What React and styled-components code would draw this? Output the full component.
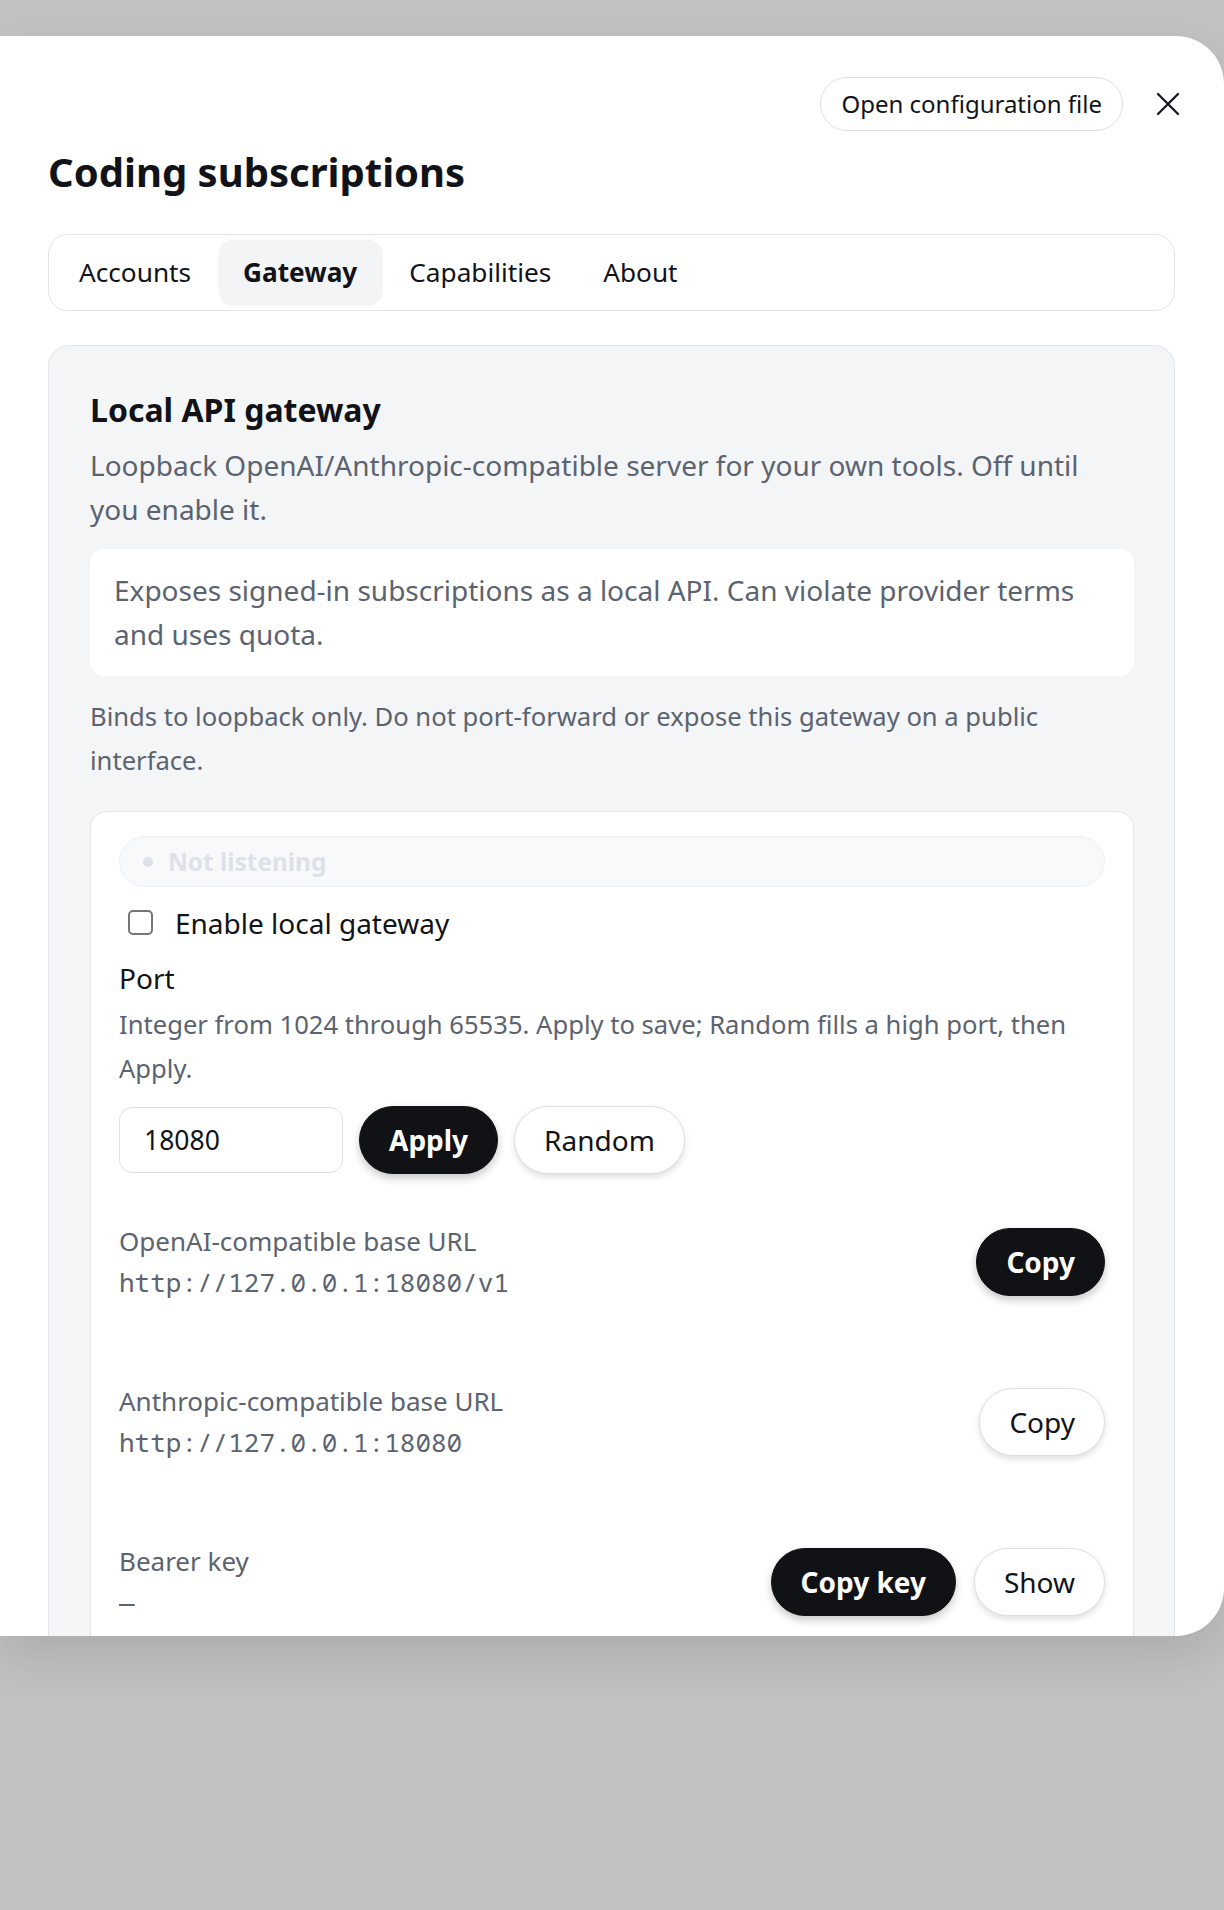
import React from "react";
import styled, { createGlobalStyle, css } from "styled-components";

const GlobalStyle = createGlobalStyle`
  html, body { margin: 0; padding: 0; background: #c1c1c1; }
  body {
    font-family: "Noto Sans", "Open Sans", sans-serif;
    color: #111318;
    -webkit-font-smoothing: antialiased;
  }
  *, *::before, *::after { box-sizing: border-box; }
`;

const Backdrop = styled.div`
  min-height: 1910px;
  padding-top: 36px;
  overflow: hidden;
`;

const Dialog = styled.section`
  width: 1224px;
  height: 1600px;
  background: #ffffff;
  border-radius: 0 48px 48px 0;
  box-shadow: 0 22px 46px rgba(0, 0, 0, 0.1);
  overflow: hidden;
  display: flex;
  flex-direction: column;
`;

const Header = styled.header`
  display: flex;
  justify-content: flex-end;
  align-items: center;
  gap: 23px;
  padding: 41px 34px 0 48px;
`;

const Button = styled.button`
  display: inline-flex;
  align-items: center;
  justify-content: center;
  height: ${(p) => (p.$small ? "54px" : "68px")};
  padding: 0 ${(p) => (p.$small ? "20px" : "29px")};
  border-radius: 999px;
  font-family: "Noto Sans", sans-serif;
  font-size: ${(p) => (p.$small ? "24px" : "28px")};
  line-height: 1;
  cursor: pointer;
  white-space: nowrap;
  ${(p) =>
    p.$primary
      ? css`
          background: #111216;
          color: #ffffff;
          font-weight: 700;
          border: 1.5px solid #111216;
          box-shadow: 0 4px 8px rgba(0, 0, 0, 0.22);
        `
      : css`
          background: #ffffff;
          color: #111318;
          font-weight: 400;
          border: 1.5px solid #dedfe2;
          box-shadow: ${p.$flat ? "none" : "0 3px 6px rgba(0, 0, 0, 0.13)"};
        `}
`;

const CloseButton = styled.button`
  width: 44px;
  height: 44px;
  display: inline-flex;
  align-items: center;
  justify-content: center;
  background: transparent;
  border: 0;
  padding: 0;
  cursor: pointer;
`;

const Body = styled.div`
  padding: 0 49px 0 48px;
  display: flex;
  flex-direction: column;
`;

const Title = styled.h1`
  margin: 16.5px 0 0;
  font-size: 40px;
  line-height: 48px;
  font-weight: 700;
  color: #111318;
`;

const TabList = styled.nav`
  margin-top: 38px;
  display: flex;
  gap: 3px;
  padding: 5.5px;
  border: 1.5px solid #e3e4e7;
  border-radius: 20px;
  background: #ffffff;
`;

const Tab = styled.button`
  height: 64px;
  padding: 0 24.5px;
  border: 0;
  border-radius: 14px;
  font-family: "Noto Sans", sans-serif;
  font-size: 26.2px;
  color: #111318;
  cursor: pointer;
  background: ${(p) => (p.$active ? "#f3f4f6" : "transparent")};
  font-weight: ${(p) => (p.$active ? 700 : 400)};
  box-shadow: ${(p) => (p.$active ? "0 1px 3px rgba(0,0,0,0.08)" : "none")};
`;

const Card = styled.section`
  margin-top: 34px;
  background: #f4f5f7;
  border: 1.5px solid #e2e4e8;
  border-radius: 21px;
  padding: 42.5px 40px 60px 41px;
  display: flex;
  flex-direction: column;
`;

const CardTitle = styled.h2`
  margin: 0;
  font-size: 32px;
  line-height: 44px;
  font-weight: 700;
  color: #111318;
`;

const Lead = styled.p`
  margin: 12px 0 0;
  max-width: 1015px;
  font-size: 28px;
  line-height: 43.5px;
  color: #5c6370;
`;

const Notice = styled.div`
  margin-top: 18px;
  background: #ffffff;
  border-radius: 14px;
  padding: 20px 24px;
  font-size: 28px;
  line-height: 43.5px;
  color: #5c6370;
`;

const Fine = styled.p`
  margin: ${(p) => p.$top || "19px"} 0 0;
  font-size: 25.6px;
  line-height: 43.5px;
  color: #5c6370;
`;

const Panel = styled.div`
  margin-top: 29px;
  background: #ffffff;
  border: 1.5px solid #e4e6ea;
  border-radius: 17px;
  padding: 24px 28px 60px;
  display: flex;
  flex-direction: column;
`;

const StatusPill = styled.div`
  height: 51px;
  display: flex;
  align-items: center;
  gap: 15px;
  padding: 0 23px;
  border-radius: 999px;
  background: #f8f9fb;
  border: 1.5px solid #eff1f4;
  color: #dde2ea;
  font-size: 24.4px;
  font-weight: 700;
`;

const Dot = styled.span`
  width: 10px;
  height: 10px;
  border-radius: 50%;
  background: #dde1e8;
`;

const CheckRow = styled.label`
  margin-top: 14px;
  display: flex;
  align-items: center;
  gap: 22px;
  height: 43.5px;
  font-size: 28px;
  color: #111318;
`;

const Check = styled.input`
  appearance: none;
  margin: 0 0 0 9px;
  width: 25px;
  height: 25px;
  border: 2px solid #74767a;
  border-radius: 5px;
  background: #ffffff;
`;

const FieldLabel = styled.div`
  margin-top: 12px;
  font-size: 28px;
  line-height: 43.5px;
  color: #111318;
`;

const Controls = styled.div`
  margin-top: 16px;
  display: flex;
  align-items: center;
  gap: 16px;
`;

const PortInput = styled.input`
  width: 224px;
  height: 66px;
  padding: 0 24px;
  border: 1.5px solid #dfe0e3;
  border-radius: 13px;
  font-family: "Noto Sans", sans-serif;
  font-size: 26.5px;
  color: #111318;
  background: #ffffff;
  outline: none;
`;

const Endpoints = styled.div`
  margin-top: 48px;
  display: flex;
  flex-direction: column;
  gap: 80px;
`;

const EndpointRow = styled.div`
  display: flex;
  align-items: center;
  justify-content: space-between;
  gap: 24px;
`;

const EndpointInfo = styled.div`
  display: flex;
  flex-direction: column;
  gap: 2px;
`;

const EndpointLabel = styled.span`
  font-size: 26px;
  line-height: 38px;
  color: #5c6370;
`;

const EndpointValue = styled.code`
  font-family: "Noto Sans Mono", "DejaVu Sans Mono", monospace;
  font-size: 26px;
  line-height: 40px;
  color: #5c6370;
`;

const Actions = styled.div`
  display: flex;
  align-items: center;
  gap: 18px;
`;

function CloseIcon() {
  return (
    <svg width="24" height="24" viewBox="0 0 24 24" fill="none">
      <path d="M2 2 L22 22 M22 2 L2 22" stroke="#111318" strokeWidth="2.2" strokeLinecap="round" />
    </svg>
  );
}

const tabs = ["Accounts", "Gateway", "Capabilities", "About"];

const endpoints = [
  { label: "OpenAI-compatible base URL", value: "http://127.0.0.1:18080/v1", primary: true, actions: ["Copy"] },
  { label: "Anthropic-compatible base URL", value: "http://127.0.0.1:18080", primary: false, actions: ["Copy"] },
  { label: "Bearer key", value: "\u2014", actions: ["Copy key", "Show"] },
];

export default function App() {
  return (
    <>
      <GlobalStyle />
      <Backdrop>
        <Dialog>
          <Header>
            <Button $small $flat>Open configuration file</Button>
            <CloseButton aria-label="Close">
              <CloseIcon />
            </CloseButton>
          </Header>
          <Body>
            <Title>Coding subscriptions</Title>
            <TabList>
              {tabs.map((t) => (
                <Tab key={t} $active={t === "Gateway"}>{t}</Tab>
              ))}
            </TabList>
            <Card>
              <CardTitle>Local API gateway</CardTitle>
              <Lead>Loopback OpenAI/Anthropic-compatible server for your own tools. Off until you enable it.</Lead>
              <Notice>Exposes signed-in subscriptions as a local API. Can violate provider terms and uses quota.</Notice>
              <Fine>Binds to loopback only. Do not port-forward or expose this gateway on a public interface.</Fine>
              <Panel>
                <StatusPill>
                  <Dot />
                  Not listening
                </StatusPill>
                <CheckRow>
                  <Check type="checkbox" />
                  Enable local gateway
                </CheckRow>
                <FieldLabel>Port</FieldLabel>
                <Fine $top="3px">Integer from 1024 through 65535. Apply to save; Random fills a high port, then Apply.</Fine>
                <Controls>
                  <PortInput defaultValue="18080" />
                  <Button $primary>Apply</Button>
                  <Button>Random</Button>
                </Controls>
                <Endpoints>
                  {endpoints.map((e) => (
                    <EndpointRow key={e.label}>
                      <EndpointInfo>
                        <EndpointLabel>{e.label}</EndpointLabel>
                        <EndpointValue>{e.value}</EndpointValue>
                      </EndpointInfo>
                      <Actions>
                        {e.actions.length === 1 ? (
                          <Button $primary={e.primary}>{e.actions[0]}</Button>
                        ) : (
                          <>
                            <Button $primary>{e.actions[0]}</Button>
                            <Button>{e.actions[1]}</Button>
                          </>
                        )}
                      </Actions>
                    </EndpointRow>
                  ))}
                </Endpoints>
              </Panel>
            </Card>
          </Body>
        </Dialog>
      </Backdrop>
    </>
  );
}
